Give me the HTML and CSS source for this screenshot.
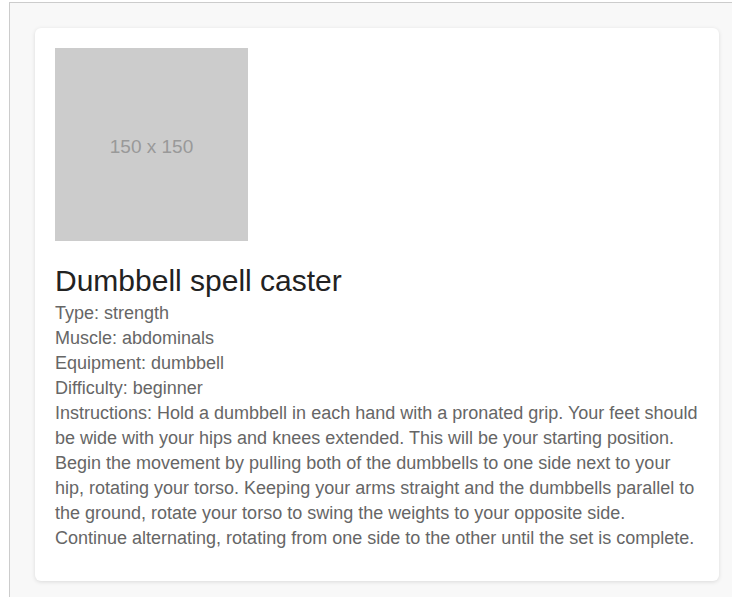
FILE: index.html
```html
<!DOCTYPE html>
<html>
<head>
<meta charset="utf-8">
<link rel="stylesheet" href="styles.css">
</head>
<body>
<div class="frame">
  <div class="card">
    <div class="thumb">150 x 150</div>
    <h2 class="title">Dumbbell spell caster</h2>
    <div class="info">
      <div>Type: strength</div>
      <div>Muscle: abdominals</div>
      <div>Equipment: dumbbell</div>
      <div>Difficulty: beginner</div>
      <div>Instructions: Hold a dumbbell in each hand with a pronated grip. Your feet should be wide with your hips and knees extended. This will be your starting position. Begin the movement by pulling both of the dumbbells to one side next to your hip, rotating your torso. Keeping your arms straight and the dumbbells parallel to the ground, rotate your torso to swing the weights to your opposite side. Continue alternating, rotating from one side to the other until the set is complete.</div>
    </div>
  </div>
</div>
</body>
</html>
```

FILE: styles.css
```css
html, body {
  margin: 0;
  padding: 0;
  background: #ffffff;
  font-family: "Liberation Sans", Arial, sans-serif;
}
.frame {
  margin: 2px 0 0 9px;
  border-top: 1px solid #cccccc;
  border-left: 1px solid #cccccc;
  background: #f8f8f8;
  padding: 25px 0 0 25px;
  height: 600px;
  box-sizing: border-box;
}
.card {
  width: 684px;
  box-sizing: border-box;
  background: #ffffff;
  border-radius: 6px;
  box-shadow: 0 1px 4px rgba(0, 0, 0, 0.12);
  padding: 20px 20px 30px 20px;
}
.thumb {
  width: 193px;
  height: 193px;
  box-sizing: border-box;
  padding-top: 5px;
  background: #cccccc;
  color: #999999;
  font-size: 19px;
  display: flex;
  align-items: center;
  justify-content: center;
}
.title {
  margin: 22px 0 0 0;
  font-size: 30px;
  font-weight: normal;
  line-height: 36px;
  color: #222222;
}
.info {
  margin-top: 2px;
  font-size: 18px;
  line-height: 25px;
  color: #666666;
}
```
